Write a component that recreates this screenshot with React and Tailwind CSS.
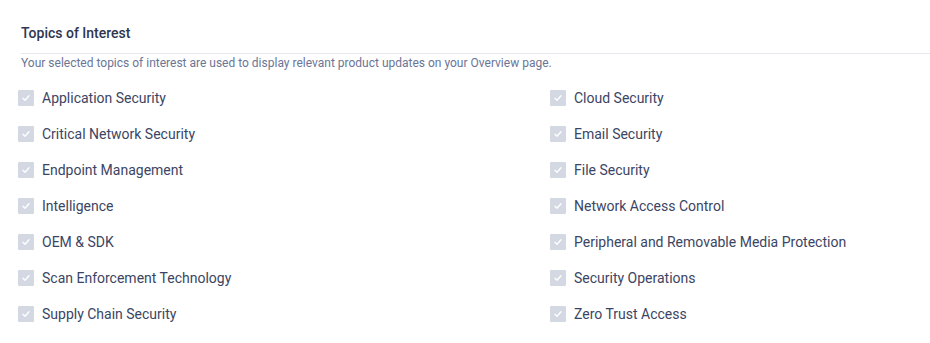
const topics = [
  ["Application Security", "Cloud Security"],
  ["Critical Network Security", "Email Security"],
  ["Endpoint Management", "File Security"],
  ["Intelligence", "Network Access Control"],
  ["OEM & SDK", "Peripheral and Removable Media Protection"],
  ["Scan Enforcement Technology", "Security Operations"],
  ["Supply Chain Security", "Zero Trust Access"],
];

const Check = ({ label }) => (
  <label className="flex items-center h-[36px]">
    <span className="flex items-center justify-center w-[16px] h-[16px] bg-[#d3d8e3] rounded-[1px]">
      <svg width="10" height="10" viewBox="0 0 10 10" fill="none">
        <path d="M2 5.2l2 2 4-4.4" stroke="#ffffff" strokeWidth="1.4" strokeLinecap="round" strokeLinejoin="round" />
      </svg>
    </span>
    <span className="ml-[8px] text-[14px] text-[#3b4563]">{label}</span>
  </label>
);

const App = () => {
  return (
    <div className="bg-white min-h-screen font-['Roboto',sans-serif] pt-[23px]">
      <div className="pl-[21px]">
        <h2 className="text-[14px] font-medium text-[#2e3651] pb-[9px] border-b border-[#e6e6ee]">
          Topics of Interest
        </h2>
        <p className="text-[12px] text-[#6b7596]">
          Your selected topics of interest are used to display relevant product updates on your Overview page.
        </p>
      </div>
      <div className="pl-[18px] mt-[8px] grid grid-cols-[532px_1fr]">
        {topics.map(([a, b]) => (
          <div key={a} className="contents">
            <Check label={a} />
            <Check label={b} />
          </div>
        ))}
      </div>
    </div>
  );
};

export default App;
